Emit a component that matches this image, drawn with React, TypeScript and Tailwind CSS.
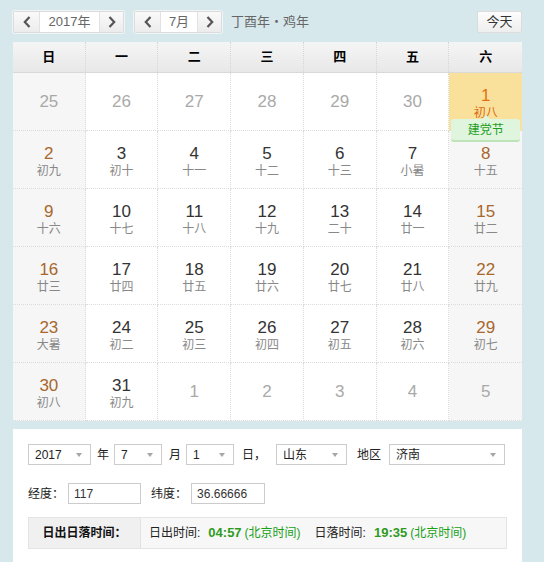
import React from "react";

type Day = { n: number; lunar?: string; other?: boolean; today?: boolean; holiday?: string };

const weeks: Day[][] = [
  [
    { n: 25, other: true },
    { n: 26, other: true },
    { n: 27, other: true },
    { n: 28, other: true },
    { n: 29, other: true },
    { n: 30, other: true },
    { n: 1, lunar: "初八", today: true, holiday: "建党节" },
  ],
  [
    { n: 2, lunar: "初九" },
    { n: 3, lunar: "初十" },
    { n: 4, lunar: "十一" },
    { n: 5, lunar: "十二" },
    { n: 6, lunar: "十三" },
    { n: 7, lunar: "小暑" },
    { n: 8, lunar: "十五" },
  ],
  [
    { n: 9, lunar: "十六" },
    { n: 10, lunar: "十七" },
    { n: 11, lunar: "十八" },
    { n: 12, lunar: "十九" },
    { n: 13, lunar: "二十" },
    { n: 14, lunar: "廿一" },
    { n: 15, lunar: "廿二" },
  ],
  [
    { n: 16, lunar: "廿三" },
    { n: 17, lunar: "廿四" },
    { n: 18, lunar: "廿五" },
    { n: 19, lunar: "廿六" },
    { n: 20, lunar: "廿七" },
    { n: 21, lunar: "廿八" },
    { n: 22, lunar: "廿九" },
  ],
  [
    { n: 23, lunar: "大暑" },
    { n: 24, lunar: "初二" },
    { n: 25, lunar: "初三" },
    { n: 26, lunar: "初四" },
    { n: 27, lunar: "初五" },
    { n: 28, lunar: "初六" },
    { n: 29, lunar: "初七" },
  ],
  [
    { n: 30, lunar: "初八" },
    { n: 31, lunar: "初九" },
    { n: 1, other: true },
    { n: 2, other: true },
    { n: 3, other: true },
    { n: 4, other: true },
    { n: 5, other: true },
  ],
];

const heads = ["日", "一", "二", "三", "四", "五", "六"];

function Chevron({ dir }: { dir: "l" | "r" }) {
  return (
    <svg width="8" height="12" viewBox="0 0 8 12">
      <polyline
        points={dir === "l" ? "6.5,1 1.8,6 6.5,11" : "1.5,1 6.2,6 1.5,11"}
        fill="none"
        stroke="#555"
        strokeWidth="2.2"
      />
    </svg>
  );
}

function Stepper({ label, mid }: { label: string; mid: string }) {
  return (
    <div className="flex h-[22px] rounded-[2px] border border-[#dcdcdc] shadow-[0_0_0_1px_#eef5f6]">
      <button className="flex w-[25px] items-center justify-center bg-gradient-to-b from-[#fafafa] to-[#ececec]">
        <Chevron dir="l" />
      </button>
      <div className={`${mid} flex items-center justify-center border-x border-[#e2e2e2] bg-white text-[13px] text-[#666]`}>
        {label}
      </div>
      <button className="flex w-[23px] items-center justify-center bg-gradient-to-b from-[#fafafa] to-[#ececec]">
        <Chevron dir="r" />
      </button>
    </div>
  );
}

function Select({ value, w }: { value: string; w: string }) {
  return (
    <div className={`${w} flex h-[21px] items-center justify-between border border-[#cccccc] bg-white pl-[6px] pr-[8px] text-[12px] text-[#222]`}>
      <span>{value}</span>
      <svg width="6" height="4" viewBox="0 0 6 4">
        <polygon points="0,0 6,0 3,4" fill="#a6a6a6" />
      </svg>
    </div>
  );
}

function Cell({ d, col }: { d: Day; col: number }) {
  const weekend = col === 0 || col === 6;
  const bg = d.today ? "bg-[#f9e19c]" : weekend ? "bg-[#f6f6f6]" : "bg-white";
  const numColor = d.today
    ? "text-[#e3700f]"
    : d.other
      ? "text-[#a9a9a9]"
      : weekend
        ? "text-[#a8672d]"
        : "text-[#333]";
  return (
    <div
      className={`relative flex h-[58px] flex-col items-center justify-center border-b border-dotted border-[#dcdcdc] ${
        col < 6 ? "border-r" : ""
      } ${d.lunar ? "pt-[4px]" : ""} ${bg}`}
    >
      <div className={`text-[17px] leading-[20px] ${numColor}`}>{d.n}</div>
      {d.lunar && (
        <div className={`text-[12px] leading-[15px] ${d.today ? "text-[#d96a0c]" : "text-[#888]"}`}>{d.lunar}</div>
      )}
      {d.holiday && (
        <div className="absolute left-[2px] right-[2px] top-[46px] z-10 flex h-[23px] items-center justify-center rounded-[3px] border-b-2 border-[#bfe3b8] bg-[#e0f5dd] text-[12px] text-[#1d9c1d]">
          <span className="absolute -top-[4px] left-1/2 -ml-[4px] h-0 w-0 border-x-[4px] border-b-[4px] border-x-transparent border-b-[#e0f5dd]" />
          {d.holiday}
        </div>
      )}
    </div>
  );
}

export default function App() {
  return (
    <div
      className="h-[562px] w-[544px] overflow-hidden bg-[#d6e8ec] pl-[13px] pr-[22px] pt-[11px]"
      style={{ fontFamily: '"Liberation Sans", "Noto Sans CJK SC", sans-serif' }}
    >
      <div className="flex items-center">
        <Stepper label="2017年" mid="w-[61px]" />
        <div className="ml-[10px]">
          <Stepper label="7月" mid="w-[38px]" />
        </div>
        <span className="ml-[9px] text-[13px] text-[#666]">丁酉年・鸡年</span>
        <button className="ml-auto flex h-[22px] w-[45px] items-center justify-center rounded-[2px] border border-[#dcdcdc] bg-gradient-to-b from-[#fdfdfd] to-[#eeeeee] text-[13px] text-[#333]">
          今天
        </button>
      </div>

      <div className="mt-[9px] w-[509px]">
        <div className="grid h-[31px] grid-cols-7 border-b border-[#d9d9d9] bg-gradient-to-b from-[#f5f5f5] to-[#e8e8e8]">
          {heads.map((h, i) => (
            <div
              key={h}
              className={`flex items-center justify-center text-[13px] font-bold text-black ${
                i < 6 ? "border-r border-dotted border-[#d6d6d6]" : ""
              }`}
            >
              {h}
            </div>
          ))}
        </div>
        <div className="grid grid-cols-7">
          {weeks.map((w, r) => w.map((d, c) => <Cell key={`${r}-${c}`} d={d} col={c} />))}
        </div>
      </div>

      <div className="mt-[8px] h-[200px] w-[509px] bg-white pl-[15px] pt-[15px] text-[12px] text-[#222]">
        <div className="flex items-center">
          <Select value="2017" w="w-[63px]" />
          <span className="ml-[6px]">年</span>
          <div className="ml-[5px]">
            <Select value="7" w="w-[48px]" />
          </div>
          <span className="ml-[7px]">月</span>
          <div className="ml-[5px]">
            <Select value="1" w="w-[48px]" />
          </div>
          <span className="ml-[8px]">日，</span>
          <div className="ml-[10px]">
            <Select value="山东" w="w-[71px]" />
          </div>
          <span className="ml-[10px]">地区</span>
          <div className="ml-[8px]">
            <Select value="济南" w="w-[116px]" />
          </div>
        </div>

        <div className="mt-[18px] flex items-center">
          <span>经度：</span>
          <div className="ml-[4px] flex h-[21px] w-[73px] items-center border border-[#cccccc] pl-[5px] text-[#333]">117</div>
          <span className="ml-[10px]">纬度：</span>
          <div className="ml-[4px] flex h-[21px] w-[74px] items-center border border-[#cccccc] pl-[5px] text-[#333]">36.66666</div>
        </div>

        <div className="mt-[13px] flex h-[32px] w-[479px] border border-[#e4e4e4] bg-[#f7f7f7]">
          <div className="flex w-[112px] items-center justify-center border-r border-[#e2e2e2] bg-[#f0f0f0] font-bold text-[#111]">
            日出日落时间：
          </div>
          <div className="flex items-center pl-[8px] text-[#222]">
            <span>日出时间:</span>
            <span className="ml-[8px] text-[13px] font-bold text-[#2f9a1f]">04:57</span>
            <span className="ml-[3px] text-[#19a019]">(北京时间)</span>
            <span className="ml-[14px]">日落时间:</span>
            <span className="ml-[8px] text-[13px] font-bold text-[#2f9a1f]">19:35</span>
            <span className="ml-[3px] text-[#19a019]">(北京时间)</span>
          </div>
        </div>
      </div>
    </div>
  );
}
